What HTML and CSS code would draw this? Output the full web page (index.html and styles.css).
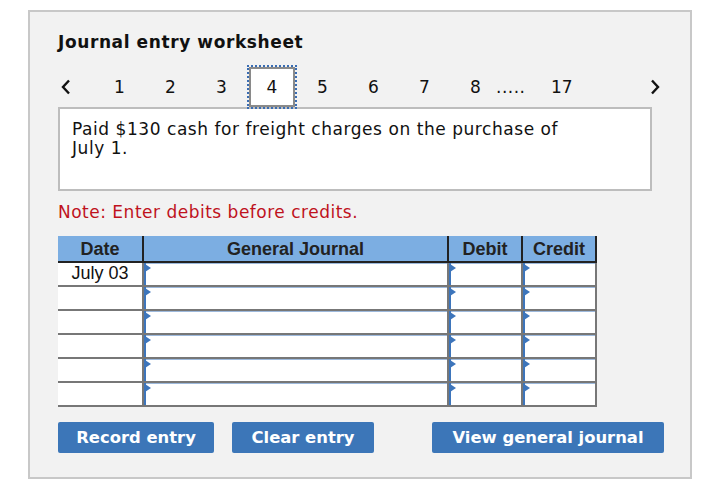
FILE: index.html
```html
<!DOCTYPE html>
<html>
<head>
<meta charset="utf-8">
<link rel="stylesheet" href="styles.css">
</head>
<body>
<div class="panel">
  <h1 class="title">Journal entry worksheet</h1>
  <div class="pager">
    <span class="arrow prev"><svg width="10" height="16" viewBox="0 0 10 16"><polyline points="8,1.5 2,8 8,14.5" fill="none" stroke="#111" stroke-width="2.4"/></svg></span>
    <span class="pg">1</span>
    <span class="pg">2</span>
    <span class="pg">3</span>
    <span class="pg cur">4</span>
    <span class="pg">5</span>
    <span class="pg">6</span>
    <span class="pg">7</span>
    <span class="pg">8</span>
    <span class="dots">.....</span>
    <span class="pg last">17</span>
    <span class="arrow next"><svg width="10" height="16" viewBox="0 0 10 16"><polyline points="2,1.5 8,8 2,14.5" fill="none" stroke="#111" stroke-width="2.4"/></svg></span>
  </div>
  <div class="desc">Paid $130 cash for freight charges on the purchase of<br>July 1.</div>
  <p class="note">Note: Enter debits before credits.</p>
  <table class="journal">
    <thead>
      <tr><th class="c-date">Date</th><th class="c-gj">General Journal</th><th class="c-dr">Debit</th><th class="c-cr">Credit</th></tr>
    </thead>
    <tbody>
      <tr><td class="date">July 03</td><td class="in"><span class="mk"></span></td><td class="in"><span class="mk"></span></td><td class="in"><span class="mk"></span></td></tr>
      <tr><td class="date"></td><td class="in"><span class="mk"></span></td><td class="in"><span class="mk"></span></td><td class="in"><span class="mk"></span></td></tr>
      <tr><td class="date"></td><td class="in"><span class="mk"></span></td><td class="in"><span class="mk"></span></td><td class="in"><span class="mk"></span></td></tr>
      <tr><td class="date"></td><td class="in"><span class="mk"></span></td><td class="in"><span class="mk"></span></td><td class="in"><span class="mk"></span></td></tr>
      <tr><td class="date"></td><td class="in"><span class="mk"></span></td><td class="in"><span class="mk"></span></td><td class="in"><span class="mk"></span></td></tr>
      <tr><td class="date"></td><td class="in"><span class="mk"></span></td><td class="in"><span class="mk"></span></td><td class="in"><span class="mk"></span></td></tr>
    </tbody>
  </table>
  <div class="buttons">
    <button class="btn b-record">Record entry</button>
    <button class="btn b-clear">Clear entry</button>
    <button class="btn b-view">View general journal</button>
  </div>
</div>
</body>
</html>
```
FILE: styles.css
```css
html, body { margin: 0; padding: 0; background: #fff; }
body { font-family: "DejaVu Sans", Verdana, sans-serif; color: #111; }

.panel {
  box-sizing: border-box;
  margin: 10px 0 0 28px;
  width: 664px;
  height: 469px;
  border: 2px solid #c8c8c8;
  background: #f2f2f2;
  padding: 21px 0 0 28px;
}

.title {
  margin: 0;
  font-size: 17px;
  line-height: 18px;
  letter-spacing: 0.6px;
  font-weight: bold;
  color: #111;
}

.pager {
  display: flex;
  align-items: center;
  height: 40px;
  margin-top: 16px;
  font-size: 17px;
}
.arrow { display: flex; align-items: center; }
.prev { padding-left: 3px; width: 33px; }
.pg { width: 51px; text-align: center; line-height: 40px; height: 40px; box-sizing: border-box; }
.pg.cur {
  width: 46px;
  margin: 0 2px;
  background: #fff;
  border: 2px solid #8a8a8a;
  line-height: 36px;
  outline: 2px dotted #3a6db3;
  position: relative;
  z-index: 1;
}
.dots { width: 55px; margin-left: -5px; letter-spacing: 0.5px; }
.pg.last { width: auto; text-align: left; }
.next { margin-left: auto; margin-right: 30px; }

.desc {
  box-sizing: border-box;
  width: 594px;
  height: 84px;
  background: #fff;
  border: 2px solid #bdbdbd;
  padding: 11px 0 0 12px;
  font-size: 17px;
  line-height: 19px;
  letter-spacing: 0.55px;
  color: #111;
}

.note {
  margin: 12px 0 0 0;
  font-size: 17px;
  line-height: 18px;
  letter-spacing: 0.5px;
  color: #bf121d;
}

.journal {
  margin-top: 15px;
  border-collapse: collapse;
  font-family: "Liberation Sans", Arial, sans-serif;
  font-size: 18px;
  table-layout: fixed;
}
.journal th {
  background: #7caee2;
  height: 25px;
  padding: 0;
  font-weight: bold;
  color: #222;
  border-right: 2px solid #222;
  border-bottom: 2px solid #222;
  text-align: center;
  line-height: 22px;
}
.journal th.c-date { width: 84px; }
.journal th.c-gj { width: 303px; }
.journal th.c-dr { width: 72px; }
.journal th.c-cr { width: 72px; }
.journal td {
  height: 22px;
  padding: 0;
  border-bottom: 2px solid #777;
  border-right: 2px solid #777;
  background: #fff;
  vertical-align: top;
}
.journal td.date { text-align: center; line-height: 21px; color: #111; }
.journal td.in {
  position: relative;
  border-left: 2px solid #777;
  box-shadow: inset 2px 0 0 #3d75bb, inset 0 1px 0 #9db9dc;
}
.mk {
  position: absolute;
  left: 1px;
  top: 1px;
  width: 0;
  height: 0;
  border-top: 4px solid transparent;
  border-bottom: 4px solid transparent;
  border-left: 6px solid #3d75bb;
}

.buttons {
  display: flex;
  margin-top: 15px;
}
.btn {
  height: 31px;
  border: 0;
  border-radius: 2px;
  background: #3c76b8;
  color: #fff;
  font-family: "DejaVu Sans", Verdana, sans-serif;
  font-weight: bold;
  font-size: 16.4px;
  padding: 0;
}
.b-record { width: 156px; }
.b-clear { width: 142px; margin-left: 18px; }
.b-view { width: 232px; margin-left: 58px; }
```
